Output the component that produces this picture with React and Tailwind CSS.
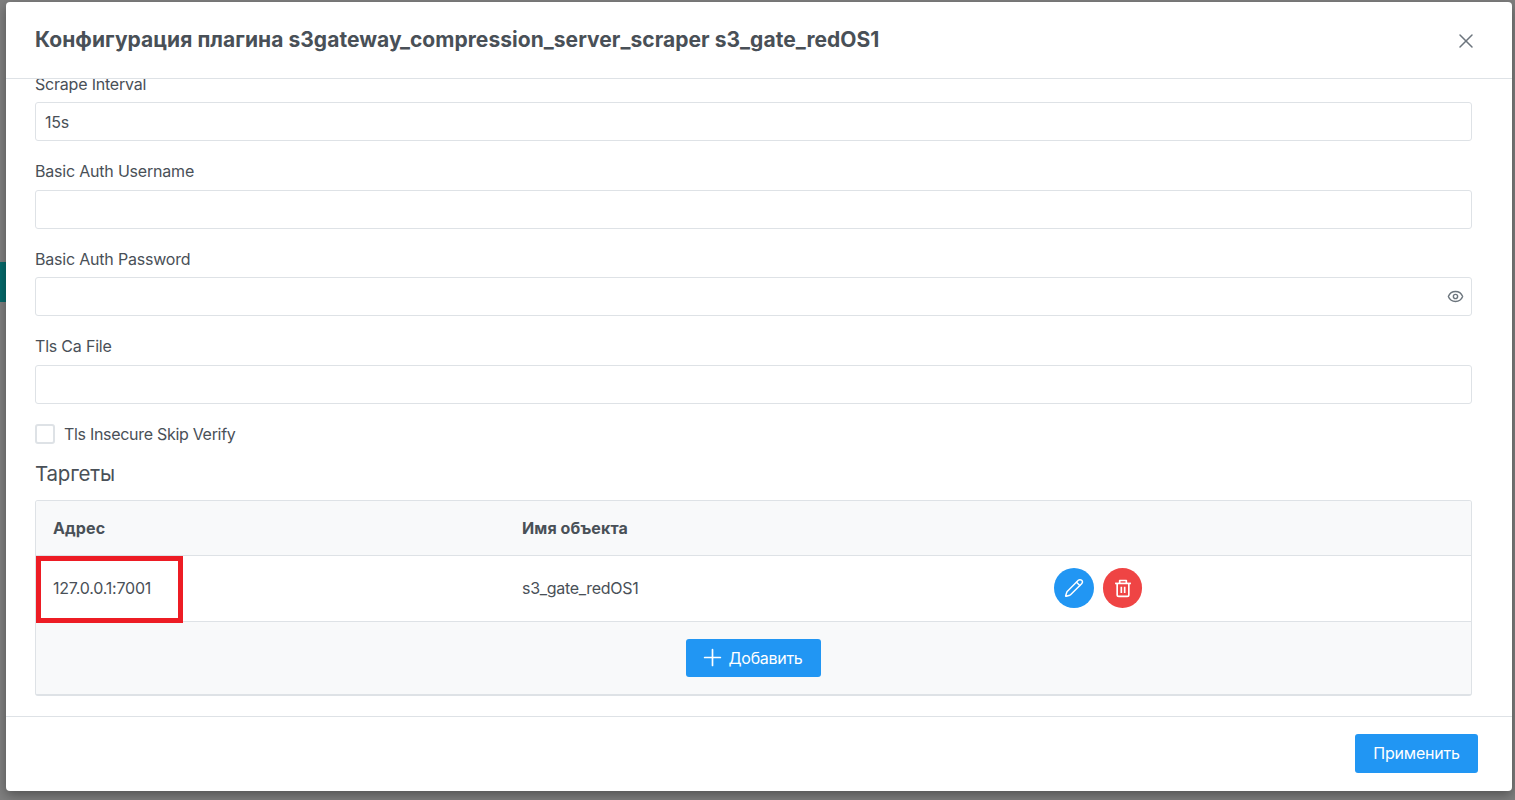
import { Eye, Pencil, Plus, X } from 'lucide-react';

const fontStack = 'font-[Inter,"Noto_Sans",sans-serif]';

function TrashIcon() {
  return (
    <svg className="h-[20px] w-[20px]" viewBox="0 0 24 24" fill="none" stroke="currentColor" strokeWidth="2" strokeLinejoin="round">
      <path d="M2.5 6.5h19" />
      <path d="M8 6.5V3h8v3.5" />
      <path d="M5 6.5V20a2 2 0 0 0 2 2h10a2 2 0 0 0 2-2V6.5" />
      <path d="M10 10.5v7.5" />
      <path d="M14 10.5v7.5" />
    </svg>
  );
}

function Field({ label, value, icon, className, gapClass = 'mt-[8.6px]' }) {
  return (
    <div className={className}>
      <label className="block text-[16px] leading-[19px] tracking-[-0.2px] text-[#495057]">{label}</label>
      <div className={`${gapClass} flex h-[39px] items-center justify-between rounded-[3px] border border-[#dee2e6] bg-white pl-[9px] pr-[7px] text-[16px] tracking-[-0.3px] text-[#495057]`}>
        <span>{value}</span>
        {icon}
      </div>
    </div>
  );
}

export default function App() {
  return (
    <div className={`flex h-[800px] w-full overflow-hidden bg-[#7f7f7f] ${fontStack}`}>
      <div className="w-[6px] shrink-0 pt-[262px]">
        <div className="h-[40px] bg-[#056a6b]"></div>
      </div>

      <div className="mt-[2px] flex h-[789px] w-[1506px] shrink-0 flex-col overflow-hidden rounded-[4px] bg-white shadow-[0_4px_12px_rgba(0,0,0,0.35)]">
        <div className="flex h-[77px] shrink-0 items-center justify-between border-b border-[#dee2e6] pl-[29px] pr-[34px]">
          <h1 className="text-[21px] font-bold tracking-[0.04px] text-[#495057]">
            Конфигурация плагина s3gateway_compression_server_scraper s3_gate_redOS1
          </h1>
          <X className="mt-[1px] h-[24px] w-[24px] text-[#6c757d]" strokeWidth={1.5} />
        </div>

        <div className="min-h-0 flex-1 overflow-hidden px-[29px] pr-[40px]">
          <div className="-mt-[3.6px]">
            <Field label="Scrape Interval" value="15s" gapClass="mt-[7.6px]" />
            <Field className="mt-[21px]" label="Basic Auth Username" />
            <Field className="mt-[21px]" label="Basic Auth Password" icon={<Eye className="h-[17px] w-[17px] text-[#6c757d]" strokeWidth={2} />} />
            <Field className="mt-[21px]" label="Tls Ca File" />

            <div className="mt-[20px] flex h-[20px] items-center gap-[9px]">
              <div className="h-[20px] w-[20px] rounded-[3px] border-2 border-[#dee2e6] bg-white"></div>
              <span className="text-[16px] tracking-[-0.3px] text-[#495057]">Tls Insecure Skip Verify</span>
            </div>

            <h2 className="mt-[18px] text-[20.5px] leading-[24px] tracking-[-0.2px] text-[#495057]">Таргеты</h2>

            <div className="relative mt-[14px] w-[1437px] overflow-hidden rounded-[3px] border border-[#dee2e6] border-b-2">
              <div className="flex h-[55px] items-center border-b border-[#dee2e6] bg-[#f8f9fa] text-[16px] font-bold tracking-[0.1px] text-[#495057]">
                <div className="w-[486px] pl-[17px]">Адрес</div>
                <div>Имя объекта</div>
              </div>
              <div className="flex h-[66px] items-center border-b border-[#dee2e6] bg-white text-[16px] tracking-[-0.2px] text-[#495057]">
                <div className="w-[486px] pl-[17px]">127.0.0.1:7001</div>
                <div className="w-[532px] tracking-[-0.3px]">s3_gate_redOS1</div>
                <div className="flex gap-[9px]">
                  <button className="flex h-[40px] w-[40px] items-center justify-center rounded-full bg-[#2196f3] text-white">
                    <Pencil className="h-[20px] w-[20px]" strokeWidth={1.75} />
                  </button>
                  <button className="flex h-[40px] w-[39px] items-center justify-center rounded-full bg-[#ef4444] text-white">
                    <TrashIcon />
                  </button>
                </div>
              </div>
              <div className="flex h-[72px] items-center justify-center bg-[#f8f9fa]">
                <button className="flex h-[38px] w-[135px] items-center justify-center gap-[3px] rounded-[3px] bg-[#2196f3] pr-[6px] text-[16px] tracking-[-0.3px] text-white">
                  <Plus className="h-[27px] w-[27px]" strokeWidth={1.5} />
                  Добавить
                </button>
              </div>
              <div className="absolute left-0 top-[55px] h-[67px] w-[147px] border-[5px] border-[#ed1c24]"></div>
            </div>
          </div>
        </div>

        <div className="flex h-[75px] shrink-0 items-start justify-end border-t border-[#dee2e6] pr-[34px] pt-[17px]">
          <button className="h-[39px] w-[123px] rounded-[3px] bg-[#2196f3] pb-[2px] text-[16px] tracking-[-0.2px] text-white">Применить</button>
        </div>
      </div>
    </div>
  );
}
